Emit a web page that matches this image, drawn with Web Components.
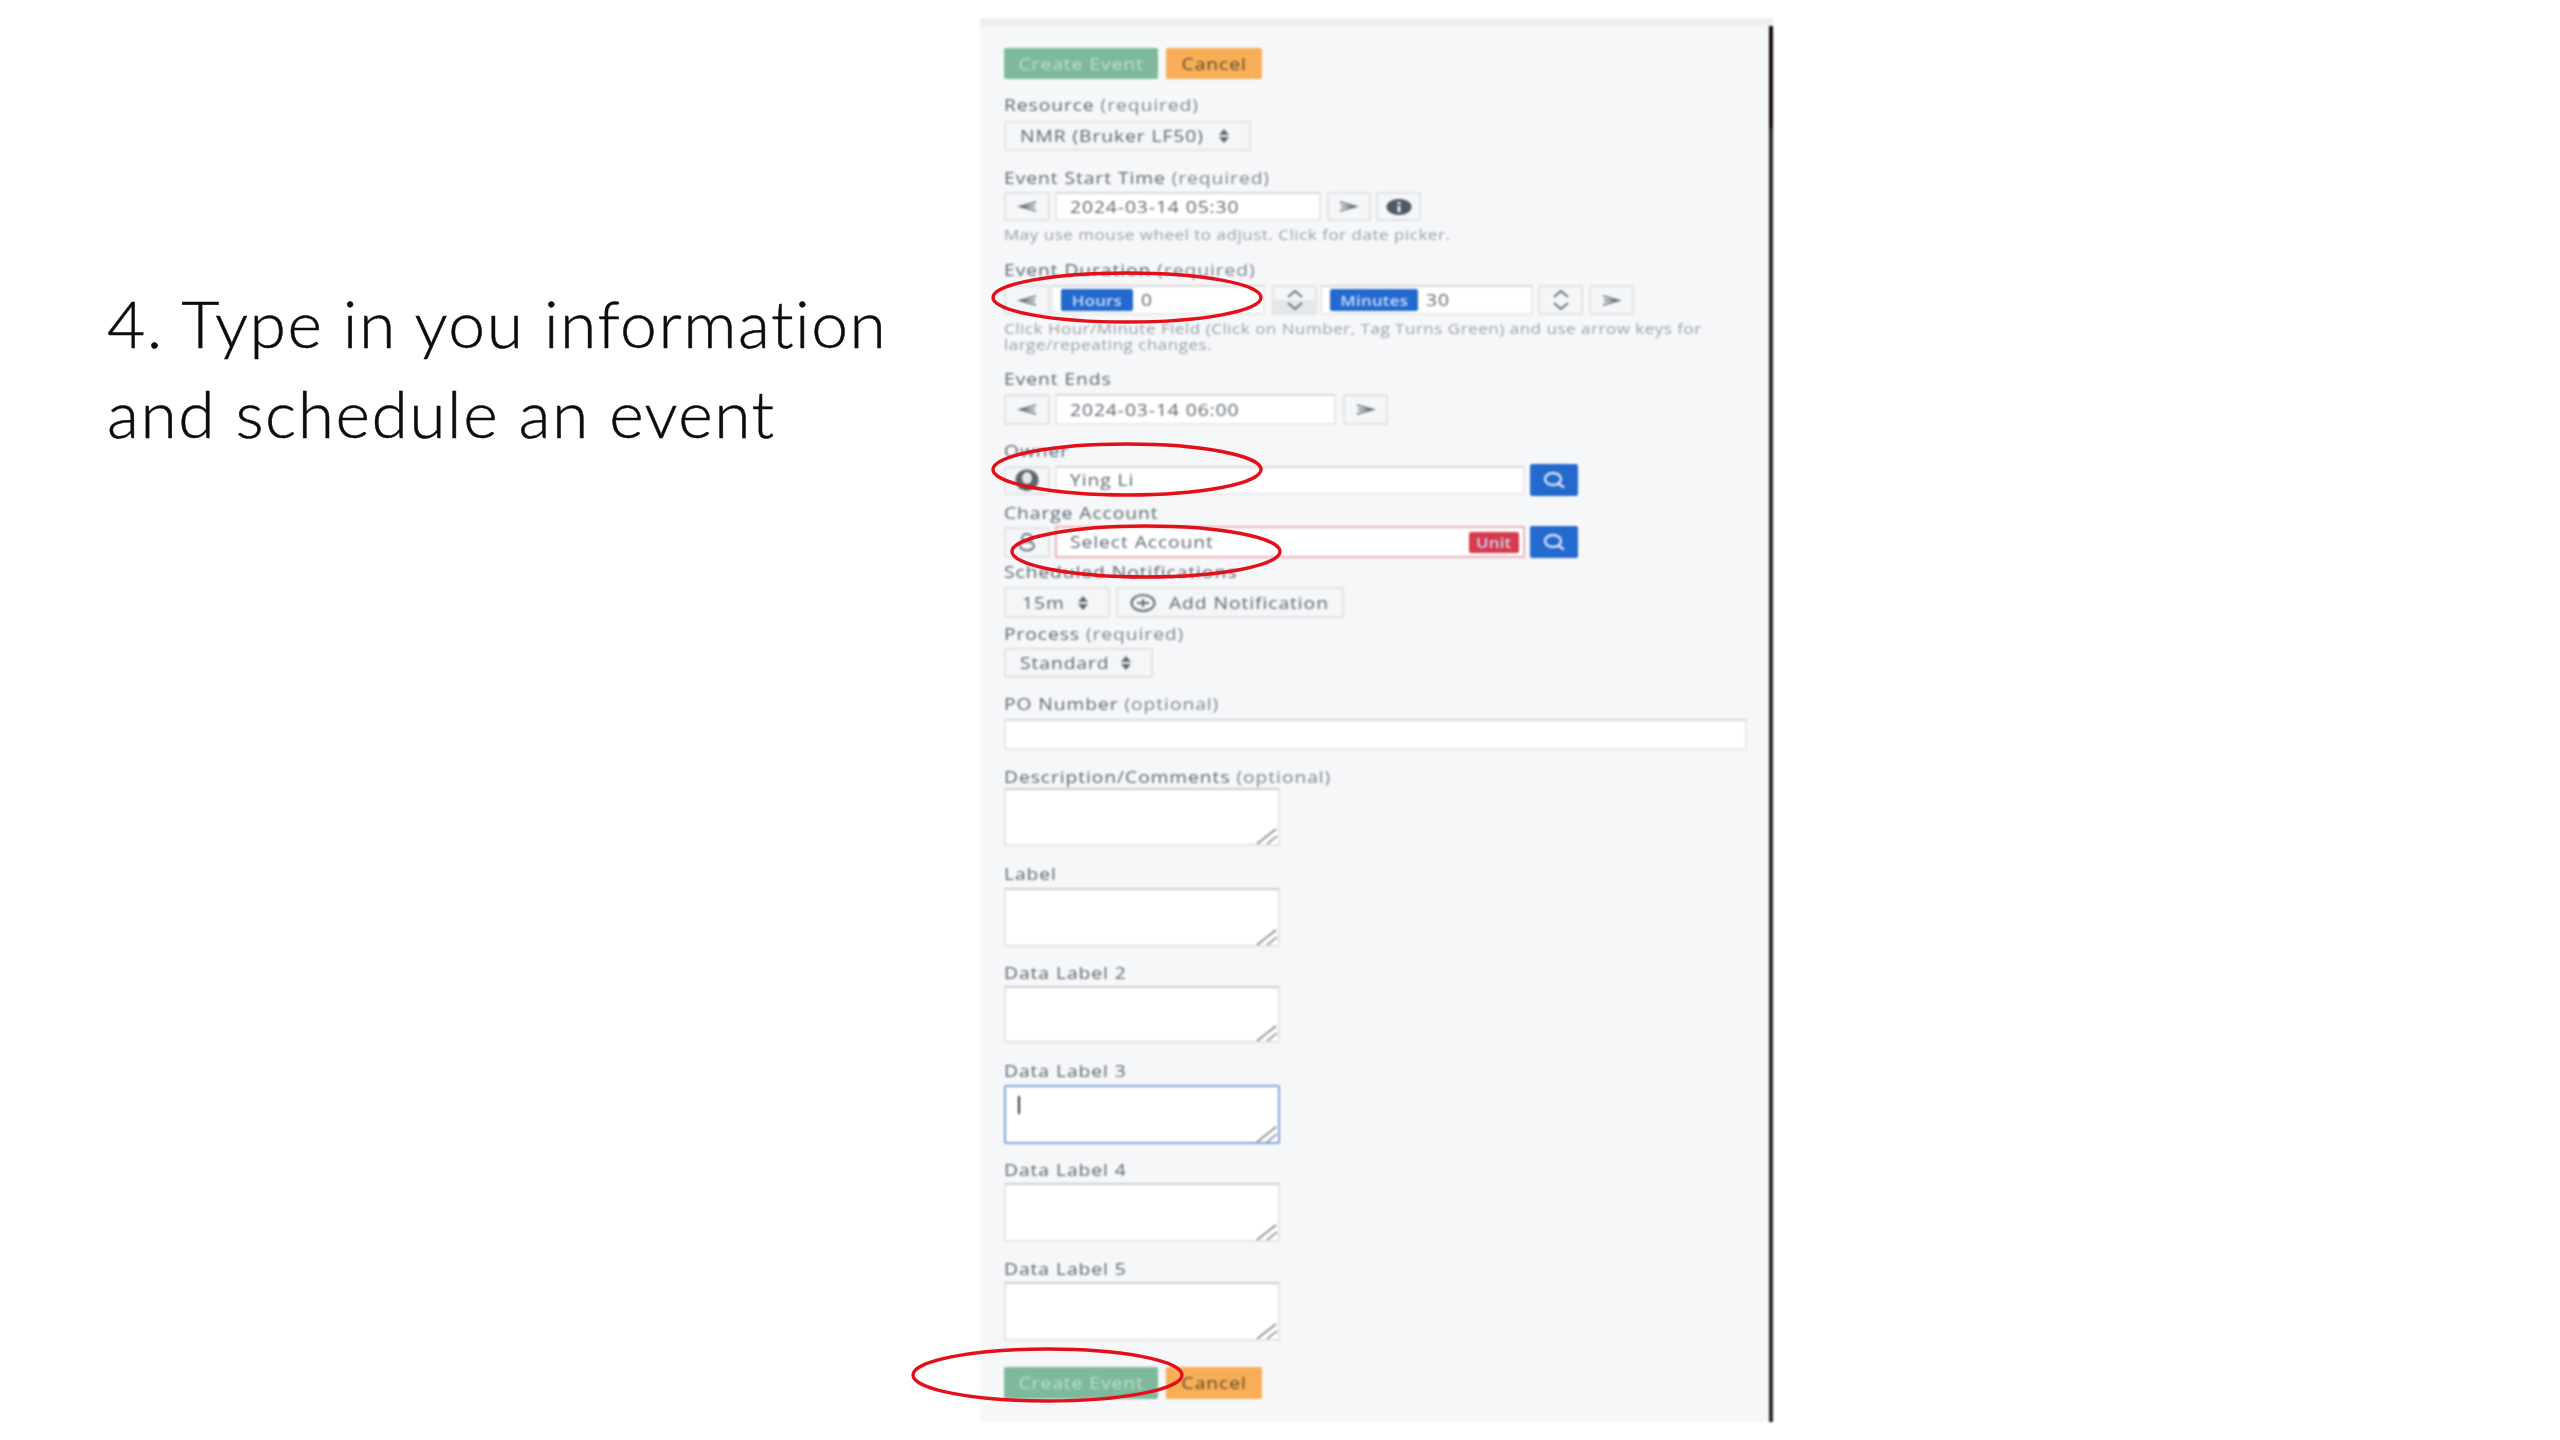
<!DOCTYPE html>
<html lang="en">
<head>
<meta charset="utf-8">
<title>Schedule an event</title>
<style>
  html, body { margin: 0; background: #fff; }
  body { font-family: "Open Sans", "Liberation Sans", sans-serif; }
</style>
</head>
<body>
<slide-page>
  <slide-caption slot="caption">4. Type in you information<br>and schedule an event</slide-caption>

  <event-form>
    <form-actions style="--mt:30px"></form-actions>

    <form-field label="Resource" note="(required)" style="--mt:16px;--gap:6px">
      <ui-select value="NMR (Bruker LF50)" style="--w:247px;--h:30px"></ui-select>
    </form-field>

    <form-field label="Event Start Time" note="(required)" style="--mt:17px;--gap:4px">
      <div style="display:flex;align-items:stretch;height:29px">
        <ui-addon icon="prev" style="--w:46px"></ui-addon>
        <ui-input value="2024-03-14 05:30" style="--w:266px;--ml:5px"></ui-input>
        <ui-addon icon="next" style="--w:44px;--ml:6px"></ui-addon>
        <ui-addon icon="info" style="--w:45px;--ml:5px"></ui-addon>
      </div>
      <form-help slot="help" style="--mt:6px">May use mouse wheel to adjust. Click for date picker.</form-help>
    </form-field>

    <form-field label="Event Duration" note="(required)" style="--mt:17px;--gap:5px">
      <div style="display:flex;align-items:stretch;height:30px">
        <ui-addon icon="prev" style="--w:46px"></ui-addon>
        <ui-input value="0" style="--w:214px;--ml:1px;--pad:8px"><ui-tag slot="before" style="--w:72px">Hours</ui-tag></ui-input>
        <ui-addon icon="spin" style="--w:45px;--ml:7px;--shade:linear-gradient(#f5f6f8 50%,#e6e7e9 50%)"></ui-addon>
        <ui-input value="30" style="--w:213px;--ml:3px;--pad:8px"><ui-tag slot="before" style="--w:88px">Minutes</ui-tag></ui-input>
        <ui-addon icon="spin" style="--w:45px;--ml:5px"></ui-addon>
        <ui-addon icon="next" style="--w:45px;--ml:6px"></ui-addon>
      </div>
      <form-help slot="help" style="--mt:6px">Click Hour/Minute Field (Click on Number, Tag Turns Green) and use arrow keys for<br>large/repeating changes.</form-help>
    </form-field>

    <form-field label="Event Ends" style="--mt:16px;--gap:5px">
      <div style="display:flex;align-items:stretch;height:31px">
        <ui-addon icon="prev" style="--w:46px"></ui-addon>
        <ui-input value="2024-03-14 06:00" style="--w:281px;--ml:5px"></ui-input>
        <ui-addon icon="next" style="--w:45px;--ml:7px"></ui-addon>
      </div>
    </form-field>

    <form-field label="Owner" style="--mt:16px;--gap:3px">
      <div style="display:flex;align-items:center;height:32px">
        <ui-addon icon="user" style="--w:46px;--h:29px"></ui-addon>
        <ui-input value="Ying Li" style="--w:470px;--ml:5px;--h:29px"></ui-input>
        <ui-search style="--ml:5px"></ui-search>
      </div>
    </form-field>

    <form-field label="Charge Account" style="--mt:7px;--gap:3px">
      <div style="display:flex;align-items:center;height:32px">
        <ui-addon icon="coins" style="--w:46px;--h:31px"></ui-addon>
        <ui-input value="Select Account" invalid style="--w:470px;--ml:5px;--h:32px"><ui-tag slot="after" style="--bg:#d63a4c;--w:50px;--tag-h:21px">Unit</ui-tag></ui-input>
        <ui-search style="--ml:5px"></ui-search>
      </div>
    </form-field>

    <form-field label="Scheduled Notifications" style="--mt:4px;--gap:5px">
      <div style="display:flex;align-items:stretch;height:31px">
        <ui-select value="15m" style="--w:106px;--h:31px;--pl:16px"></ui-select>
        <ui-notify style="--ml:6px"></ui-notify>
      </div>
    </form-field>

    <form-field label="Process" note="(required)" style="--mt:6px;--gap:4px">
      <ui-select value="Standard" style="--w:149px;--h:30px"></ui-select>
    </form-field>

    <form-field label="PO Number" note="(optional)" style="--mt:16px;--gap:5px">
      <ui-input style="--w:743px;--h:31px"></ui-input>
    </form-field>

    <form-field label="Description/Comments" note="(optional)" style="--mt:17px;--gap:1px">
      <ui-area style="--h:58px"></ui-area>
    </form-field>
    <form-field label="Label" style="--mt:18px;--gap:4px">
      <ui-area style="--h:59px"></ui-area>
    </form-field>
    <form-field label="Data Label 2" style="--mt:16px;--gap:3px">
      <ui-area style="--h:57px"></ui-area>
    </form-field>
    <form-field label="Data Label 3" style="--mt:18px;--gap:4px">
      <ui-area focused style="--h:59px"></ui-area>
    </form-field>
    <form-field label="Data Label 4" style="--mt:16px;--gap:3px">
      <ui-area style="--h:59px"></ui-area>
    </form-field>
    <form-field label="Data Label 5" style="--mt:17px;--gap:3px">
      <ui-area style="--h:59px"></ui-area>
    </form-field>

    <form-actions style="--mt:26px;--h:32px"></form-actions>
  </event-form>

  <red-ring slot="rings" style="left:992px;top:272px;width:270px;height:51px"></red-ring>
  <red-ring slot="rings" style="left:992px;top:443px;width:270px;height:53px"></red-ring>
  <red-ring slot="rings" style="left:1011px;top:525px;width:270px;height:53px"></red-ring>
  <red-ring slot="rings" style="left:912px;top:1348px;width:271px;height:54px"></red-ring>
</slide-page>

<script>
// the form in the reference is a stretched screenshot, so its text is widened too
const WIDE = `.wide { display: inline-block; transform: scaleX(1.2); transform-origin: 0 50%; letter-spacing: .8px; }`;

const ICONS = {
  prev: `<svg width="20" height="11" viewBox="0 0 20 11"><path d="M19 1 3 5.5 19 10" fill="none" stroke="#66717b" stroke-width="1.8"/><path d="M4 5.5h14" stroke="#66717b" stroke-width="1.6"/></svg>`,
  next: `<svg width="20" height="11" viewBox="0 0 20 11"><path d="M1 1l16 4.5L1 10" fill="none" stroke="#66717b" stroke-width="1.8"/><path d="M2 5.5h14" stroke="#66717b" stroke-width="1.6"/></svg>`,
  info: `<svg width="26" height="16" viewBox="0 0 26 16"><ellipse cx="13" cy="8" rx="12.5" ry="8" fill="#4d5964"/><rect x="11.5" y="7" width="3" height="6" fill="#f5f6f8"/><rect x="11.5" y="3" width="3" height="2.4" fill="#f5f6f8"/></svg>`,
  spin: `<svg width="20" height="26" viewBox="0 0 20 26"><path d="M3 10l7-6 7 6M3 16l7 6 7-6" fill="none" stroke="#6a757f" stroke-width="2"/></svg>`,
  user: `<svg width="26" height="22" viewBox="0 0 26 22"><ellipse cx="13" cy="11" rx="11.5" ry="10.5" fill="#5a6670"/><ellipse cx="13" cy="9" rx="5" ry="6" fill="#e4e7ea"/><path d="M4 19c3-4 15-4 18 0l-9 2.5z" fill="#46525c"/></svg>`,
  coins: `<svg width="18" height="20" viewBox="0 0 18 20"><ellipse cx="9" cy="6" rx="5" ry="4" fill="none" stroke="#6a757f" stroke-width="2"/><ellipse cx="9" cy="14" rx="7" ry="4.5" fill="none" stroke="#6a757f" stroke-width="2"/></svg>`
};

class SlidePage extends HTMLElement {
  constructor() {
    super();
    this.attachShadow({ mode: "open" });
    this.shadowRoot.innerHTML = `
    <style>
      :host { display: flex; position: relative; width: 2560px; height: 1440px; overflow: hidden; background: #fff; }
      .left { width: 980px; flex: none; }
    </style>
    <div class="left"><slot name="caption"></slot></div>
    <slot></slot>
    <slot name="rings"></slot>`;
  }
}

class SlideCaption extends HTMLElement {
  constructor() {
    super();
    this.attachShadow({ mode: "open" });
    this.shadowRoot.innerHTML = `
    <style>
      :host { display: block; padding: 278px 0 0 107px; font: 300 66px/90px Lato, "Open Sans", sans-serif; letter-spacing: 1.5px;
        color: #0c0c0c; -webkit-text-stroke: .5px #0c0c0c; filter: blur(.4px); }
    </style>
    <slot></slot>`;
  }
}

class EventForm extends HTMLElement {
  constructor() {
    super();
    this.attachShadow({ mode: "open" });
    this.shadowRoot.innerHTML = `
    <style>
      :host { display: block; box-sizing: border-box; flex: none; width: 793px; height: 1404px; margin-top: 18px;
        background: linear-gradient(#120606, #120606) right 0 top 0 / 4px 110px no-repeat,
                    linear-gradient(#262628, #262628) right 0 top 0 / 4px 100% no-repeat,
                    #f6f7f9;
        border-top: 8px solid #eeeeef; padding-left: 24px; background-origin: border-box;
        font-size: 16px; color: #5c666f; filter: blur(.9px); }
      .inner { margin-top: -8px; display: flex; flex-direction: column; align-items: flex-start; }
    </style>
    <div class="inner"><slot></slot></div>`;
  }
}

class FormActions extends HTMLElement {
  constructor() {
    super();
    this.attachShadow({ mode: "open" });
    this.shadowRoot.innerHTML = `
    <style>
      :host { display: flex; gap: 8px; margin-top: var(--mt, 0); height: var(--h, 31px); }
      div { display: flex; align-items: center; justify-content: center; border-radius: 2px; font-size: 16px; }
      ${WIDE}
      .wide { transform-origin: 50% 50%; }
      .go { width: 154px; background: #7fb99d; color: #b9e0cb; }
      .no { width: 96px; background: #f8ae57; color: #5b4a2a; }
    </style>
    <div class="go"><span class="wide">Create Event</span></div><div class="no"><span class="wide">Cancel</span></div>`;
  }
}

class FormField extends HTMLElement {
  connectedCallback() {
    if (this.shadowRoot) return;
    this.attachShadow({ mode: "open" });
    const note = this.getAttribute("note");
    this.shadowRoot.innerHTML = `
    <style>
      :host { display: block; margin-top: var(--mt, 0); }
      label { display: block; height: 20px; line-height: 20px; margin-bottom: var(--gap, 4px); white-space: nowrap; font-size: 16px; color: #5c666f; }
      label span span { color: #7d868e; }
      ${WIDE}
    </style>
    <label><span class="wide">${this.getAttribute("label")}${note ? ` <span>${note}</span>` : ""}</span></label>
    <slot></slot>
    <slot name="help"></slot>`;
  }
}

class FormHelp extends HTMLElement {
  constructor() {
    super();
    this.attachShadow({ mode: "open" });
    this.shadowRoot.innerHTML = `
    <style>
      :host { display: block; margin-top: var(--mt, 0); font-size: 14px; line-height: 16px; color: #9aa1a8; white-space: nowrap; }
      ${WIDE}
      .wide { letter-spacing: .45px; transform: scaleX(1.21); }
    </style>
    <span class="wide"><slot></slot></span>`;
  }
}

class UiAddon extends HTMLElement {
  connectedCallback() {
    if (this.shadowRoot) return;
    this.attachShadow({ mode: "open" });
    this.shadowRoot.innerHTML = `
    <style>
      :host { display: flex; align-items: center; justify-content: center; box-sizing: border-box; flex: none;
        width: var(--w, 46px); height: var(--h, auto); margin-left: var(--ml, 0);
        background: var(--shade, #f5f6f8); border: 2px solid #e2e3e5; border-radius: 2px; }
      svg { display: block; }
    </style>
    ${ICONS[this.getAttribute("icon")] || ""}`;
  }
}

class UiInput extends HTMLElement {
  connectedCallback() {
    if (this.shadowRoot) return;
    this.attachShadow({ mode: "open" });
    const invalid = this.hasAttribute("invalid");
    this.shadowRoot.innerHTML = `
    <style>
      :host { display: flex; align-items: center; box-sizing: border-box; flex: none;
        width: var(--w, 200px); height: var(--h, auto); margin-left: var(--ml, 0); padding: 0 4px 0 var(--pad, 5px);
        background: #fff; border: 2px solid ${invalid ? "#eab2b7" : "#e9e9eb"}; border-top-color: ${invalid ? "#eab2b7" : "#d9d9db"};
        font-size: 16px; color: #5c666f; white-space: nowrap; }
      .value { flex: 1; padding-left: 8px; }
      ${WIDE}
    </style>
    <slot name="before"></slot>
    <div class="value"><span class="wide">${this.getAttribute("value") || ""}</span></div>
    <slot name="after"></slot>`;
  }
}

class UiTag extends HTMLElement {
  constructor() {
    super();
    this.attachShadow({ mode: "open" });
    this.shadowRoot.innerHTML = `
    <style>
      :host { display: flex; align-items: center; justify-content: center; flex: none;
        width: var(--w, 72px); height: var(--tag-h, 22px); background: var(--bg, #2469cd); color: #c9dcf6;
        border-radius: 2px; font-size: 14px; font-weight: 600; white-space: nowrap; }
      ${WIDE}
      .wide { transform-origin: 50% 50%; letter-spacing: .2px; }
    </style>
    <span class="wide"><slot></slot></span>`;
  }
}

class UiSelect extends HTMLElement {
  connectedCallback() {
    if (this.shadowRoot) return;
    this.attachShadow({ mode: "open" });
    this.shadowRoot.innerHTML = `
    <style>
      :host { display: flex; align-items: center; justify-content: space-between; box-sizing: border-box; flex: none;
        width: var(--w, 200px); height: var(--h, 30px); padding: 0 19px 0 var(--pl, 14px);
        background: #f5f6f8; border: 2px solid #e2e3e5; border-radius: 2px;
        font-size: 16px; color: #5c666f; white-space: nowrap; }
      svg { flex: none; }
      ${WIDE}
    </style>
    <span class="wide">${this.getAttribute("value")}</span>
    <svg width="12" height="14" viewBox="0 0 12 14"><path d="M6 0l5 6H1zM6 14l5-6H1z" fill="#5d6872"/></svg>`;
  }
}

class UiNotify extends HTMLElement {
  constructor() {
    super();
    this.attachShadow({ mode: "open" });
    this.shadowRoot.innerHTML = `
    <style>
      :host { display: flex; align-items: center; box-sizing: border-box; width: 228px; margin-left: var(--ml, 0); padding-left: 12px; gap: 13px;
        background: #f5f6f8; border: 2px solid #e2e3e5; border-radius: 2px;
        font-size: 16px; color: #5c666f; white-space: nowrap; }
      ${WIDE}
    </style>
    <svg width="26" height="18" viewBox="0 0 26 18"><ellipse cx="13" cy="9" rx="11.5" ry="8" fill="none" stroke="#5d6872" stroke-width="2"/><path d="M7 9h12M13 5v8" stroke="#5d6872" stroke-width="2"/></svg>
    <span class="wide">Add Notification</span>`;
  }
}

class UiSearch extends HTMLElement {
  constructor() {
    super();
    this.attachShadow({ mode: "open" });
    this.shadowRoot.innerHTML = `
    <style>
      :host { display: flex; align-items: center; justify-content: center; flex: none; width: 48px; height: 32px;
        margin-left: var(--ml, 0); background: #2469cd; border-radius: 2px; }
    </style>
    <svg width="26" height="18" viewBox="0 0 26 18"><ellipse cx="12" cy="8" rx="8" ry="6" fill="none" stroke="#d7e5f8" stroke-width="2.4"/><path d="M17 12.5l6 4" stroke="#d7e5f8" stroke-width="2.6"/></svg>`;
  }
}

class UiArea extends HTMLElement {
  connectedCallback() {
    if (this.shadowRoot) return;
    this.attachShadow({ mode: "open" });
    const focused = this.hasAttribute("focused");
    this.shadowRoot.innerHTML = `
    <style>
      :host { display: block; position: relative; box-sizing: border-box; width: 276px; height: var(--h, 58px); background: #fff;
        border: 2px solid ${focused ? "#7fa4e0" : "#e4e4e6"}; border-top-color: ${focused ? "#7fa4e0" : "#cdcdcf"};
        ${focused ? "border-radius: 2px;" : ""} }
      i { display: block; width: 2px; height: 18px; margin: 9px 0 0 12px; background: #333; }
      svg { position: absolute; right: 0; bottom: 0; }
    </style>
    ${focused ? "<i></i>" : ""}
    <svg width="22" height="16" viewBox="0 0 22 16"><path d="M1 16 20 1M11 16 21 8" stroke="#7f8388" stroke-width="1.6" fill="none"/></svg>`;
  }
}

class RedRing extends HTMLElement {
  constructor() {
    super();
    this.attachShadow({ mode: "open" });
    this.shadowRoot.innerHTML = `
    <style>
      :host { display: block; position: absolute; filter: blur(.4px); }
      svg { display: block; width: 100%; height: 100%; overflow: visible; }
    </style>
    <svg viewBox="0 0 270 52" preserveAspectRatio="none"><ellipse cx="135" cy="26" rx="134" ry="25" fill="none" stroke="#e3101a" stroke-width="3.4" vector-effect="non-scaling-stroke"/></svg>`;
  }
}

customElements.define("slide-page", SlidePage);
customElements.define("slide-caption", SlideCaption);
customElements.define("event-form", EventForm);
customElements.define("form-actions", FormActions);
customElements.define("form-field", FormField);
customElements.define("form-help", FormHelp);
customElements.define("ui-addon", UiAddon);
customElements.define("ui-input", UiInput);
customElements.define("ui-tag", UiTag);
customElements.define("ui-select", UiSelect);
customElements.define("ui-notify", UiNotify);
customElements.define("ui-search", UiSearch);
customElements.define("ui-area", UiArea);
customElements.define("red-ring", RedRing);
</script>
</body>
</html>
